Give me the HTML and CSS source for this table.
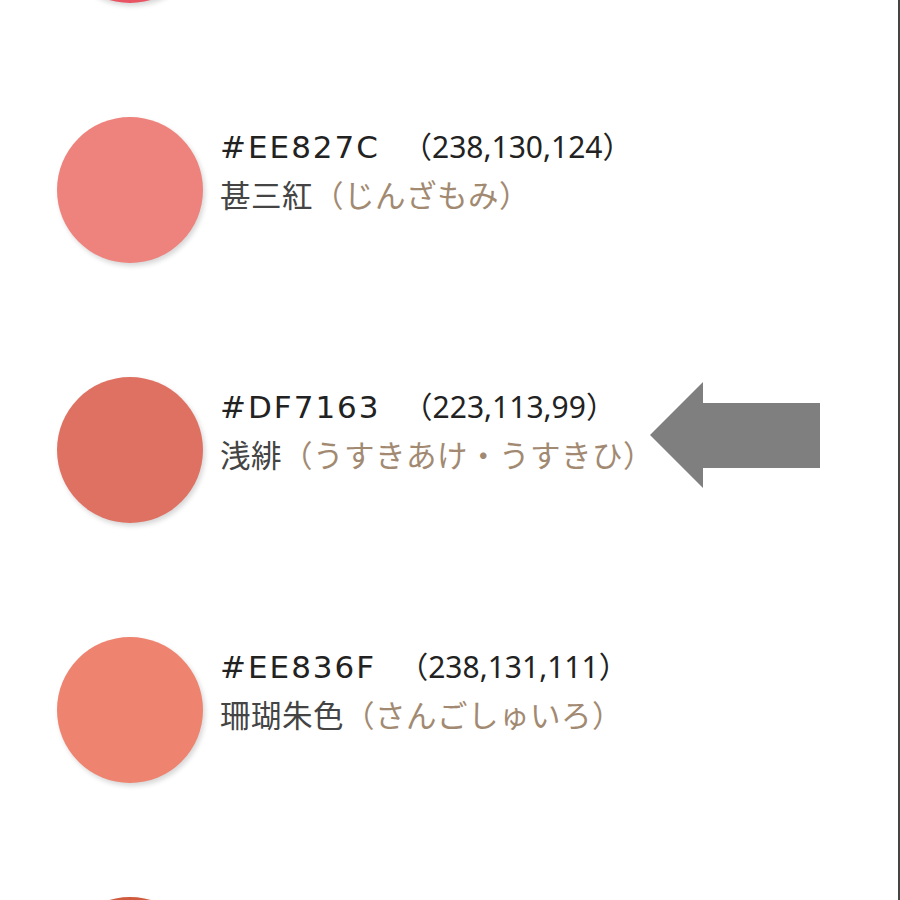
FILE: index.html
```html
<!DOCTYPE html>
<html lang="ja">
<head>
<meta charset="utf-8">
<title>Colors</title>
<link rel="stylesheet" href="styles.css">
</head>
<body>
<div class="page">
  <ul class="list">
    <li class="row">
      <span class="swatch" style="background:#E95464"></span>
      <div class="info">
        <div class="code"><span class="hex">#E95464</span><span class="rgb">（233,84,100）</span></div>
        <div class="name">韓紅<span class="kana">（からくれない）</span></div>
      </div>
    </li>
    <li class="row">
      <span class="swatch" style="background:#EE827C"></span>
      <div class="info">
        <div class="code"><span class="hex">#EE827C</span><span class="rgb">（238,130,124）</span></div>
        <div class="name">甚三紅<span class="kana">（じんざもみ）</span></div>
      </div>
    </li>
    <li class="row">
      <span class="swatch" style="background:#DF7163"></span>
      <div class="info">
        <div class="code"><span class="hex">#DF7163</span><span class="rgb">（223,113,99）</span></div>
        <div class="name">浅緋<span class="kana">（うすきあけ・うすきひ）</span></div>
      </div>
    </li>
    <li class="row">
      <span class="swatch" style="background:#EE836F"></span>
      <div class="info">
        <div class="code"><span class="hex">#EE836F</span><span class="rgb">（238,131,111）</span></div>
        <div class="name">珊瑚朱色<span class="kana">（さんごしゅいろ）</span></div>
      </div>
    </li>
    <li class="row">
      <span class="swatch" style="background:#D05A3E"></span>
      <div class="info">
        <div class="code"><span class="hex">#D05A3E</span><span class="rgb">（208,90,62）</span></div>
        <div class="name">赤<span class="kana">（あか）</span></div>
      </div>
    </li>
  </ul>
  <svg class="arrow" width="172" height="108" viewBox="0 0 172 108">
    <polygon points="0,53 53,0 53,21 170,21 170,86 53,86 53,106" fill="#7f7f7f"/>
  </svg>
</div>
</body>
</html>
```
FILE: styles.css
```css
html, body {
  margin: 0;
  padding: 0;
  background: #fff;
}
.page {
  position: relative;
  width: 898px;
  height: 900px;
  overflow: hidden;
  border-right: 2px solid #454545;
  background: #fff;
}
.list {
  list-style: none;
  margin: -143px 0 0 0;
  padding: 0 0 0 57px;
  display: flex;
  flex-direction: column;
  gap: 114px;
}
.row {
  display: flex;
  align-items: flex-start;
  gap: 17px;
  height: 146px;
}
.swatch {
  flex: none;
  width: 146px;
  height: 146px;
  border-radius: 50%;
  box-shadow: 2px 3px 5px rgba(0, 0, 0, 0.16);
}
.info {
  padding-top: 10px;
  display: flex;
  flex-direction: column;
  gap: 1px;
}
.code {
  color: #222;
  line-height: 40px;
  white-space: nowrap;
}
.hex {
  font-family: "DejaVu Sans", sans-serif;
  font-size: 31px;
  letter-spacing: 2px;
}
.rgb {
  font-family: "Noto Sans", "Noto Sans CJK JP", sans-serif;
  font-size: 30px;
  margin-left: 22px;
}
.name {
  font-family: "Noto Sans CJK JP", sans-serif;
  font-size: 30.5px;
  letter-spacing: 0.5px;
  line-height: 40px;
  color: #444;
  white-space: nowrap;
}
.kana {
  color: #a28a72;
}
.arrow {
  position: absolute;
  left: 650px;
  top: 382px;
}
```
